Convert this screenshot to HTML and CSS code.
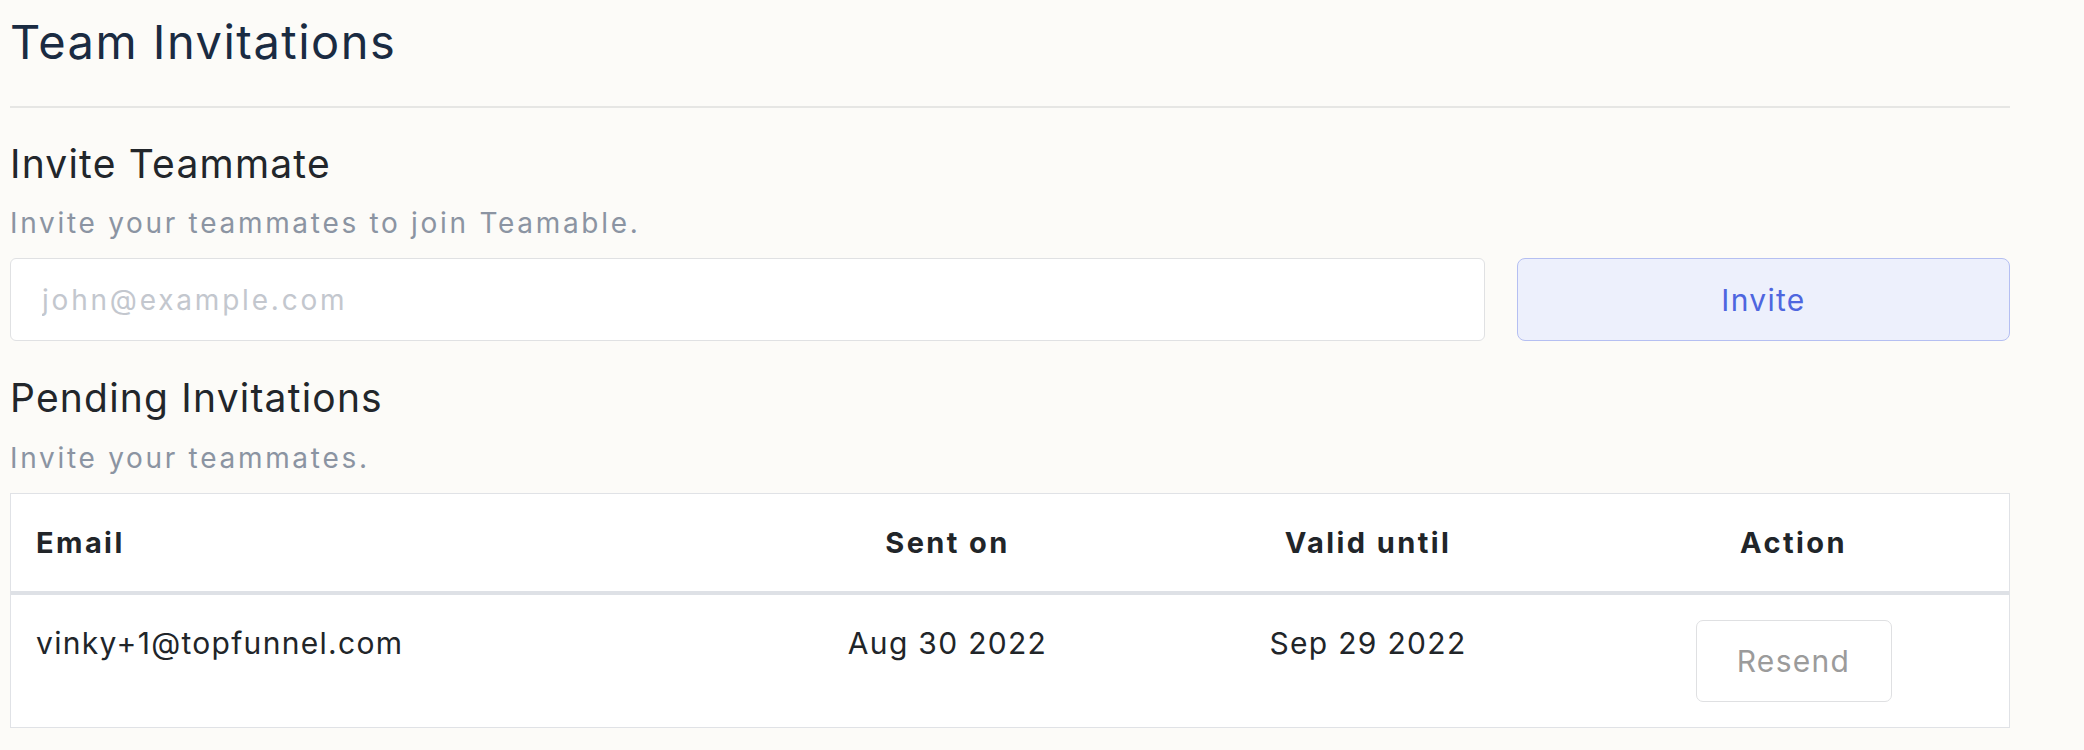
FILE: index.html
```html
<!DOCTYPE html>
<html>
<head>
<meta charset="utf-8">
<title>Team Invitations</title>
<link rel="stylesheet" href="styles.css">
</head>
<body>
<main class="page">
  <h1 class="title">Team Invitations</h1>
  <hr class="divider">

  <section class="section">
    <h2 class="heading">Invite Teammate</h2>
    <p class="subtitle">Invite your teammates to join Teamable.</p>
    <form class="invite-row">
      <input class="email-input" type="email" placeholder="john@example.com">
      <button class="invite-btn" type="button">Invite</button>
    </form>
  </section>

  <section class="section pending">
    <h2 class="heading">Pending Invitations</h2>
    <p class="subtitle">Invite your teammates.</p>
    <div class="table-wrap">
      <table class="inv-table">
        <colgroup>
          <col class="col-email">
          <col class="col-sent">
          <col class="col-valid">
          <col class="col-action">
        </colgroup>
        <thead>
          <tr>
            <th class="left">Email</th>
            <th>Sent on</th>
            <th>Valid until</th>
            <th>Action</th>
          </tr>
        </thead>
        <tbody>
          <tr>
            <td class="left">vinky+1@topfunnel.com</td>
            <td>Aug 30 2022</td>
            <td>Sep 29 2022</td>
            <td><button class="resend-btn" type="button">Resend</button></td>
          </tr>
        </tbody>
      </table>
    </div>
  </section>
</main>
</body>
</html>
```

FILE: styles.css
```css
* { box-sizing: border-box; }

html, body {
  margin: 0;
  background: #fcfbf8;
}

body {
  font-family: Inter, "Noto Sans", sans-serif;
  color: #212529;
}

.page {
  width: 2010px;
  padding: 12px 0 0 10px;
}

.title {
  margin: 0;
  font-size: 47px;
  line-height: 60px;
  font-weight: 400;
  letter-spacing: 1.5px;
  color: #1a2b42;
}

.divider {
  margin: 34px 0 0;
  border: 0;
  border-top: 2px solid #e6e6e4;
  height: 0;
}

.section {
  margin-top: 32px;
}

.section.pending {
  margin-top: 33px;
}

.heading {
  margin: 0;
  font-size: 39px;
  line-height: 48px;
  font-weight: 400;
  letter-spacing: 1.2px;
  color: #22262b;
}

.subtitle {
  margin: 17px 0 0;
  font-size: 28px;
  line-height: 36px;
  letter-spacing: 2.7px;
  color: #8b94a2;
}

.pending .subtitle {
  margin-top: 18px;
}

.invite-row {
  margin: 17px 0 0;
  display: grid;
  grid-template-columns: 1fr 493px;
  column-gap: 32px;
}

.email-input {
  height: 83px;
  margin: 0;
  padding: 0 0 0 31px;
  border: 1px solid #e0e1e3;
  border-radius: 6px;
  background: #fff;
  font-family: inherit;
  font-size: 28px;
  letter-spacing: 2.8px;
  color: #212529;
  outline: none;
}

.email-input::placeholder {
  color: #c3c7ce;
}

.invite-btn {
  height: 83px;
  margin: 0;
  border: 1px solid #b5bff2;
  border-radius: 8px;
  background: #edf0fc;
  font-family: inherit;
  font-size: 30px;
  letter-spacing: 1.3px;
  color: #4e66df;
  cursor: pointer;
}

.table-wrap {
  margin-top: 17px;
  border: 1px solid #e0e2e6;
  background: #fff;
}

.inv-table {
  width: 100%;
  border-collapse: collapse;
  table-layout: fixed;
}

.col-email { width: 726px; }
.col-sent { width: 421px; }
.col-valid { width: 420px; }
.col-action { width: auto; }

.inv-table th {
  padding: 26px 25px 25px;
  font-size: 29px;
  line-height: 46px;
  font-weight: 700;
  letter-spacing: 2.4px;
  text-align: center;
  color: #212529;
  border-bottom: 4px solid #dee1e6;
}

.inv-table td {
  padding: 25px;
  font-size: 30px;
  line-height: 46px;
  letter-spacing: 1.3px;
  text-align: center;
  vertical-align: top;
  color: #212529;
}

.inv-table .left {
  text-align: left;
}

.resend-btn {
  width: 196px;
  height: 82px;
  margin: 0;
  padding: 0;
  border: 1px solid #dfe0e2;
  border-radius: 7px;
  background: #fff;
  font-family: inherit;
  font-size: 30px;
  letter-spacing: 1.3px;
  color: #9b9b9b;
  vertical-align: top;
  cursor: pointer;
}
```
